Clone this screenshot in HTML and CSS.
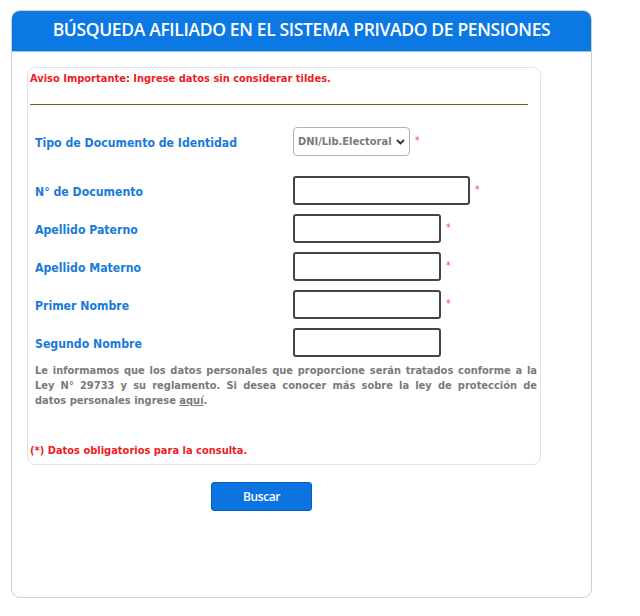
FILE: index.html
```html
<!DOCTYPE html>
<html lang="es">
<head>
<meta charset="utf-8">
<title>Búsqueda Afiliado</title>
<link rel="stylesheet" href="styles.css">
</head>
<body>
<div class="card">
  <div class="card-head">BÚSQUEDA AFILIADO EN EL SISTEMA PRIVADO DE PENSIONES</div>
  <div class="card-body">
    <div class="panel">
      <div class="notice">Aviso Importante: Ingrese datos sin considerar tildes.</div>
      <div class="rule"></div>
      <div class="form">
        <div class="row row-select">
          <label class="lbl">Tipo de Documento de Identidad</label>
          <div class="ctl">
            <div class="select"><span>DNI/Lib.Electoral</span>
              <svg class="chev" width="9" height="6" viewBox="0 0 9 6"><path d="M1 1 L4.5 4.5 L8 1" fill="none" stroke="#333" stroke-width="1.8"/></svg>
            </div>
            <span class="req">*</span>
          </div>
        </div>
        <div class="row row-doc">
          <label class="lbl">N° de Documento</label>
          <div class="ctl"><div class="input wide"></div><span class="req">*</span></div>
        </div>
        <div class="row">
          <label class="lbl">Apellido Paterno</label>
          <div class="ctl"><div class="input"></div><span class="req">*</span></div>
        </div>
        <div class="row">
          <label class="lbl">Apellido Materno</label>
          <div class="ctl"><div class="input"></div><span class="req">*</span></div>
        </div>
        <div class="row">
          <label class="lbl">Primer Nombre</label>
          <div class="ctl"><div class="input"></div><span class="req">*</span></div>
        </div>
        <div class="row row-last">
          <label class="lbl">Segundo Nombre</label>
          <div class="ctl"><div class="input"></div></div>
        </div>
        <p class="info"><span class="ln jl">Le informamos que los datos personales que proporcione serán tratados conforme a la</span><span class="ln jl">Ley N° 29733 y su reglamento. Si desea conocer más sobre la ley de protección de</span><span class="ln">datos personales ingrese <u>aquí</u>.</span></p>
      </div>
      <div class="mandatory">(*) Datos obligatorios para la consulta.</div>
    </div>
    <div class="actions"><button class="btn">Buscar</button></div>
  </div>
</div>
</body>
</html>
```
FILE: styles.css
```css
html, body { margin: 0; padding: 0; background: #fff; }
body { font-family: "DejaVu Sans Condensed", "DejaVu Sans", sans-serif; }
.card {
  margin: 10px 0 0 11px;
  width: 579px;
  height: 586px;
  border: 1px solid #cfcfcf;
  border-radius: 9px;
  overflow: hidden;
  box-sizing: content-box;
}
.card-head {
  background: #0b78e3;
  color: #fff;
  height: 41px;
  line-height: 36px;
  text-align: center;
  font-family: "Open Sans", sans-serif;
  font-weight: 600;
  font-size: 17.5px;
  letter-spacing: -0.35px;
  border-bottom: 1px solid #9cc6ef;
  box-sizing: border-box;
}
.card-body { padding: 15px 0 0 15px; }
.panel {
  width: 514px;
  height: 398px;
  border: 1px solid #e2e2e2;
  border-radius: 8px;
  box-sizing: border-box;
  padding: 3px 0 0 2px;
  display: flex;
  flex-direction: column;
}
.notice { color: #ee1c24; font-weight: bold; font-size: 11px; line-height: 14px; margin-top: 1px; }
.rule { width: 498px; height: 0; border-top: 1px solid #7b5a3c; margin-top: 18px; }
.form { padding-left: 5px; margin-top: 22px; }
.row { display: grid; grid-template-columns: 258px auto; align-items: center; height: 29px; margin-bottom: 9px; }
.row-select { margin-bottom: 20px; }
.lbl { color: #1a7ad9; font-weight: bold; font-size: 12.2px; padding-top: 3px; }
.ctl { display: flex; align-items: center; }
.select {
  width: 117px; height: 29px; box-sizing: border-box;
  border: 1px solid #b3b3b3; border-radius: 4px;
  display: flex; align-items: center; justify-content: space-between;
  padding: 0 4px 0 4px;
  color: #7a7a7a; font-size: 11px; font-weight: bold;
}
.chev { margin-top: 1px; }
.input {
  width: 148px; height: 29px; box-sizing: border-box;
  border: 2px solid #444; border-radius: 3px;
}
.input.wide { width: 177px; }
.req { color: #f04646; font-size: 10px; margin-left: 5px; margin-top: -3px; }
.row-last { margin-bottom: 6px; }
.info {
  margin: 0; width: 502px;
  color: #7a7a7a; font-size: 11px; font-weight: bold; line-height: 15px;
}
.ln { display: block; white-space: nowrap; }
.ln.jl { text-align: justify; text-align-last: justify; }
.mandatory { color: #ee1c24; font-weight: bold; font-size: 11px; margin-top: 36px; }
.actions { padding: 17px 0 0 184px; }
.btn {
  width: 101px; height: 29px;
  background: #0b74e0; color: #fff;
  border: 1px solid #0a5fbd; border-radius: 3px;
  font-family: "Open Sans", sans-serif; font-size: 12px; font-weight: 600;
  letter-spacing: -0.4px;
}
```
